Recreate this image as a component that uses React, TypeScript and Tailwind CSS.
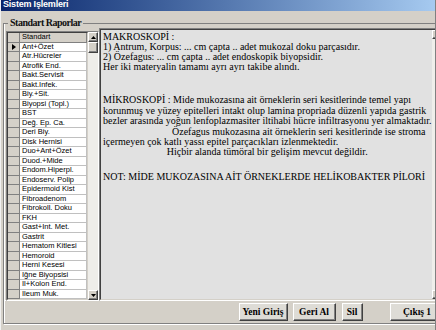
import React from 'react';

const items = [
  'Ant+Özet',
  'Atr.Hücreler',
  'Atrofik End.',
  'Bakt.Servisit',
  'Bakt.İnfek.',
  'Biy.+Sit.',
  'Biyopsi (Topl.)',
  'BST',
  'Değ. Ep. Ca.',
  'Deri Biy.',
  'Disk Hernisi',
  'Duo+Ant+Özet',
  'Duod.+Mide',
  'Endom.Hiperpl.',
  'Endoserv. Polip',
  'Epidermoid Kist',
  'Fibroadenom',
  'Fibrokoll. Doku',
  'FKH',
  'Gast+İnt. Met.',
  'Gastrit',
  'Hematom Kitlesi',
  'Hemoroid',
  'Herni Kesesi',
  'İğne Biyopsisi',
  'İl+Kolon End.',
  'İleum Muk.',
];

const Arrow = ({ up }: { up?: boolean }) => (
  <svg width="5" height="3" viewBox="0 0 5 3">
    {up ? <path d="M2.5 0 L5 3 L0 3 Z" fill="#000" /> : <path d="M0 0 L5 0 L2.5 3 Z" fill="#000" />}
  </svg>
);

const ScrollBtn = ({ up, h }: { up?: boolean; h: string }) => (
  <div
    className={`${h} flex items-center justify-center bg-[#d4d0c8] border border-t-white border-l-white border-r-[#404040] border-b-[#404040] shadow-[inset_-1px_-1px_0_#808080]`}
  >
    <Arrow up={up} />
  </div>
);

const Button = ({ label, w }: { label: string; w: string }) => (
  <button
    className={`${w} h-[18px] flex items-center justify-center bg-[#dedcd6] border border-t-white border-l-white border-r-[#404040] border-b-[#404040] shadow-[inset_-1px_-1px_0_#808080] text-[9.5px] font-bold text-black font-['Liberation_Serif',serif]`}
  >
    {label}
  </button>
);

const App = () => {
  return (
    <div className="w-[436px] h-[330px] overflow-hidden bg-[#d4d0c8] flex flex-col border-l border-r border-l-[#f0f0f0] border-r-[#808080]">
      <div className="h-[11px] shrink-0 bg-linear-to-r from-[#0a246a] to-[#a6caf0] px-[2px] overflow-hidden">
        <span className="block -mt-[1px] text-[9px] leading-[10px] font-bold text-white tracking-[-0.2px] font-['Liberation_Sans',sans-serif]">
          Sistem İşlemleri
        </span>
      </div>

      <div className="px-[2px] pt-[7px]">
        <fieldset className="border border-[#808080] shadow-[inset_1px_0_0_#fff,1px_1px_0_#fff] px-0 pb-[2px]">
          <legend className="ml-[4px] px-[2px] text-[10px] leading-[10px] font-bold tracking-[-0.5px] text-[#111] font-['Liberation_Serif',serif]">
            Standart Raporlar
          </legend>

          <div className="flex items-start h-[273px] pl-[2px] pr-[1px] border-b border-b-white">
            {/* left grid */}
            <div className="mt-[3px] w-[93px] h-[270px] flex border border-t-[#808080] border-l-[#808080] border-r-white border-b-white">
              <div className="flex-1 flex flex-col border border-t-[#404040] border-l-[#404040] border-r-[#d4d0c8] border-b-[#d4d0c8] bg-white font-['Liberation_Sans',sans-serif] text-[7.5px] text-black">
                <div className="flex h-[9.5px] shrink-0">
                  <div className="w-[12px] bg-[#d4d0c8] border-r border-b border-[#808080]" />
                  <div className="flex-1 bg-[#d4d0c8] border-r border-b border-[#808080] pl-[2px] leading-[8.5px]">Standart</div>
                </div>
                {items.map((it, i) => (
                  <div key={it} className="flex h-[9.5px] shrink-0">
                    <div className="w-[12px] bg-[#d4d0c8] border-r border-b border-[#808080] flex items-center justify-center">
                      {i === 0 && (
                        <svg width="4" height="6" viewBox="0 0 4 6">
                          <path d="M0 0 L4 3 L0 6 Z" fill="#000" />
                        </svg>
                      )}
                    </div>
                    <div className="flex-1 border-r border-b border-[#c0c0c0] pl-[2px] leading-[8.5px] whitespace-nowrap overflow-hidden">
                      {it}
                    </div>
                  </div>
                ))}
              </div>
              <div className="w-[10px] flex flex-col bg-[#eeede9]">
                <ScrollBtn up h="h-[10px]" />
                <div className="h-[11px] bg-[#d4d0c8] border border-t-white border-l-white border-r-[#404040] border-b-[#404040] shadow-[inset_-1px_-1px_0_#808080]" />
                <div className="flex-1" />
                <ScrollBtn h="h-[10px]" />
              </div>
            </div>

            {/* memo */}
            <div className="flex-1 h-[273px] flex border border-t-[#808080] border-l-[#808080] border-r-white border-b-white">
              <div className="flex-1 flex border border-t-[#404040] border-l-[#404040] border-r-[#d4d0c8] border-b-[#d4d0c8] bg-[#e1e1e1] overflow-hidden">
                <div className="flex-1 overflow-hidden pl-[2px] pt-[2px] text-[10px] text-black font-['Liberation_Serif',serif] whitespace-nowrap">
                  <div className="leading-[10px]">
                    <div>MAKROSKOPİ :</div>
                    <div>1) Antrum, Korpus: ... cm çapta .. adet mukozal doku parçasıdır.</div>
                    <div>2) Özefagus: ... cm çapta .. adet endoskopik biyopsidir.</div>
                    <div>Her iki materyalin tamamı ayrı ayrı takibe alındı.</div>
                  </div>
                  <div className="mt-[23px] leading-[10.5px]">
                    <div>MİKROSKOPİ : Mide mukozasına ait örneklerin seri kesitlerinde temel yapı</div>
                    <div>korunmuş ve yüzey epitelleri intakt olup lamina propriada düzenli yapıda gastrik</div>
                    <div>bezler arasında yoğun lenfoplazmasiter iltihabi hücre infiltrasyonu yer almaktadır.</div>
                  </div>
                  <div className="leading-[10px]">
                    <div className="pl-[69px]">Özefagus mukozasına ait örneklerin seri kesitlerinde ise stroma</div>
                    <div>içermeyen çok katlı yassı epitel parçacıkları izlenmektedir.</div>
                    <div className="text-center">Hiçbir alanda tümöral bir gelişim mevcut değildir.</div>
                  </div>
                  <div className="mt-[15px] leading-[10px]">
                    NOT: MİDE MUKOZASINA AİT ÖRNEKLERDE HELİKOBAKTER PİLORİ
                  </div>
                </div>
                <div className="w-[11px] flex flex-col bg-[#efeeea]">
                  <ScrollBtn up h="h-[9px]" />
                  <div className="flex-1" />
                  <ScrollBtn h="h-[9px]" />
                </div>
              </div>
            </div>
          </div>

          <div className="flex items-center justify-end mt-[2px] pr-[1px]">
            <Button label="Yeni Giriş" w="w-[49px]" />
            <div className="w-[5px]" />
            <Button label="Geri Al" w="w-[43px]" />
            <div className="w-[6px]" />
            <Button label="Sil" w="w-[21px]" />
            <div className="w-[27px]" />
            <Button label="Çıkış 1" w="w-[55px]" />
          </div>
        </fieldset>
      </div>
    </div>
  );
};

export default App;
